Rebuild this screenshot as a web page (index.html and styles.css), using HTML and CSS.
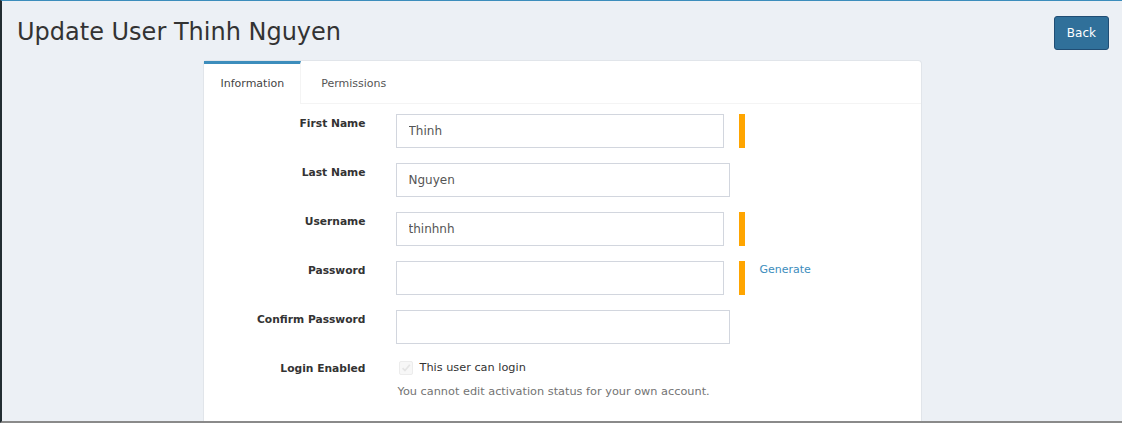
FILE: index.html
```html
<!DOCTYPE html>
<html lang="en">
<head>
<meta charset="utf-8">
<title>Update User Thinh Nguyen</title>
<link rel="stylesheet" href="styles.css">
</head>
<body>
<div class="frame">
  <header class="content-header">
    <h1 class="page-title">Update User Thinh Nguyen</h1>
    <button class="btn-back" type="button">Back</button>
  </header>
  <section class="content">
    <div class="card">
      <ul class="tabs">
        <li class="tab active">Information</li>
        <li class="tab">Permissions</li>
      </ul>
      <form class="form">
        <div class="row">
          <label class="label">First Name</label>
          <div class="field">
            <input class="input" type="text" value="Thinh">
            <span class="req-bar"></span>
          </div>
        </div>
        <div class="row">
          <label class="label">Last Name</label>
          <div class="field">
            <input class="input wide" type="text" value="Nguyen">
          </div>
        </div>
        <div class="row">
          <label class="label">Username</label>
          <div class="field">
            <input class="input" type="text" value="thinhnh">
            <span class="req-bar"></span>
          </div>
        </div>
        <div class="row">
          <label class="label">Password</label>
          <div class="field">
            <input class="input" type="password" value="">
            <span class="req-bar"></span>
            <a class="link" href="#">Generate</a>
          </div>
        </div>
        <div class="row">
          <label class="label">Confirm Password</label>
          <div class="field">
            <input class="input wide" type="password" value="">
          </div>
        </div>
        <div class="row">
          <label class="label">Login Enabled</label>
          <div class="field column">
            <div class="check-line">
              <span class="checkbox">
                <svg width="14" height="14" viewBox="0 0 14 14"><path d="M3 7.2 L5.8 10 L11.5 3.2" fill="none" stroke="#e4e4e4" stroke-width="2"/></svg>
              </span>
              <span class="check-text">This user can login</span>
            </div>
            <p class="help">You cannot edit activation status for your own account.</p>
          </div>
        </div>
      </form>
    </div>
  </section>
</div>
</body>
</html>
```
FILE: styles.css
```css
* { box-sizing: border-box; }
html, body { margin: 0; padding: 0; }
body {
  font-family: "DejaVu Sans", sans-serif;
  color: #333;
  background: #fff;
}
.frame {
  height: 423px;
  overflow: hidden;
  background: #ecf0f5;
  border-top: 1px solid #3c8dbc;
  border-left: 2px solid #222d32;
  border-bottom: 2px solid #8a8a8a;
  display: flex;
  flex-direction: column;
}
.content-header {
  display: flex;
  justify-content: space-between;
  align-items: flex-start;
  padding: 15px 13px 0 15px;
}
.page-title {
  margin: 2px 0 0;
  font-size: 24px;
  font-weight: normal;
  line-height: 28px;
  color: #333;
}
.btn-back {
  height: 34px;
  padding: 0 12px;
  font-family: "DejaVu Sans", sans-serif;
  font-size: 12px;
  line-height: 32px;
  color: #fff;
  background: #30709a;
  border: 1px solid #204d74;
  border-radius: 3px;
}
.content {
  padding-top: 11px;
  flex: 1;
}
.card {
  width: 717px;
  margin: 0 auto;
  background: #fff;
  border-radius: 3px 3px 0 0;
  box-shadow: 0 0 0 1px #e1e5ea;
  min-height: 400px;
}
.tabs {
  display: flex;
  margin: 0;
  padding: 0;
  list-style: none;
  border-bottom: 1px solid #f4f4f4;
}
.tab {
  border-top: 3px solid transparent;
  padding: 1px 17px 0;
  margin-right: 3px;
  line-height: 38px;
  font-size: 11px;
  color: #555;
}
.tab.active {
  border-top-color: #3c8dbc;
  border-right: 1px solid #f4f4f4;
  padding: 1px 16px 1px 17px;
  margin-bottom: -1px;
  background: #fff;
  color: #444;
}
.form {
  padding: 10px 0 30px;
}
.row {
  display: flex;
  align-items: flex-start;
  margin-bottom: 15px;
}
.label {
  width: 177px;
  padding: 2px 15px 0 0;
  text-align: right;
  font-size: 10.7px;
  font-weight: bold;
  line-height: 16px;
  color: #333;
}
.field {
  display: flex;
  align-items: flex-start;
  padding-left: 15px;
}
.field.column {
  flex-direction: column;
}
.input {
  width: 328px;
  height: 34px;
  padding: 6px 12px;
  font-family: "DejaVu Sans", sans-serif;
  font-size: 12px;
  color: #555;
  border: 1px solid #d2d6de;
  border-radius: 0;
  background: #fff;
  outline: none;
}
.input.wide { width: 334px; }
.req-bar {
  width: 6px;
  height: 34px;
  margin-left: 15px;
  background: #ffa500;
}
.link {
  margin-left: 15px;
  padding-top: 1px;
  font-size: 11px;
  line-height: 16px;
  color: #3c8dbc;
  text-decoration: none;
}
.check-line {
  display: flex;
  align-items: center;
  padding: 2px 0 0 3px;
}
.checkbox {
  display: flex;
  width: 14px;
  height: 14px;
  border: 1px solid #ececec;
  border-radius: 2px;
  background: #f7f7f7;
  align-items: center;
  justify-content: center;
}
.checkbox svg { display: block; }
.check-text {
  margin-left: 7px;
  font-size: 11.3px;
  line-height: 14px;
  color: #333;
}
.help {
  margin: 9px 0 0 2px;
  font-size: 11.3px;
  line-height: 16px;
  color: #737373;
}
```
